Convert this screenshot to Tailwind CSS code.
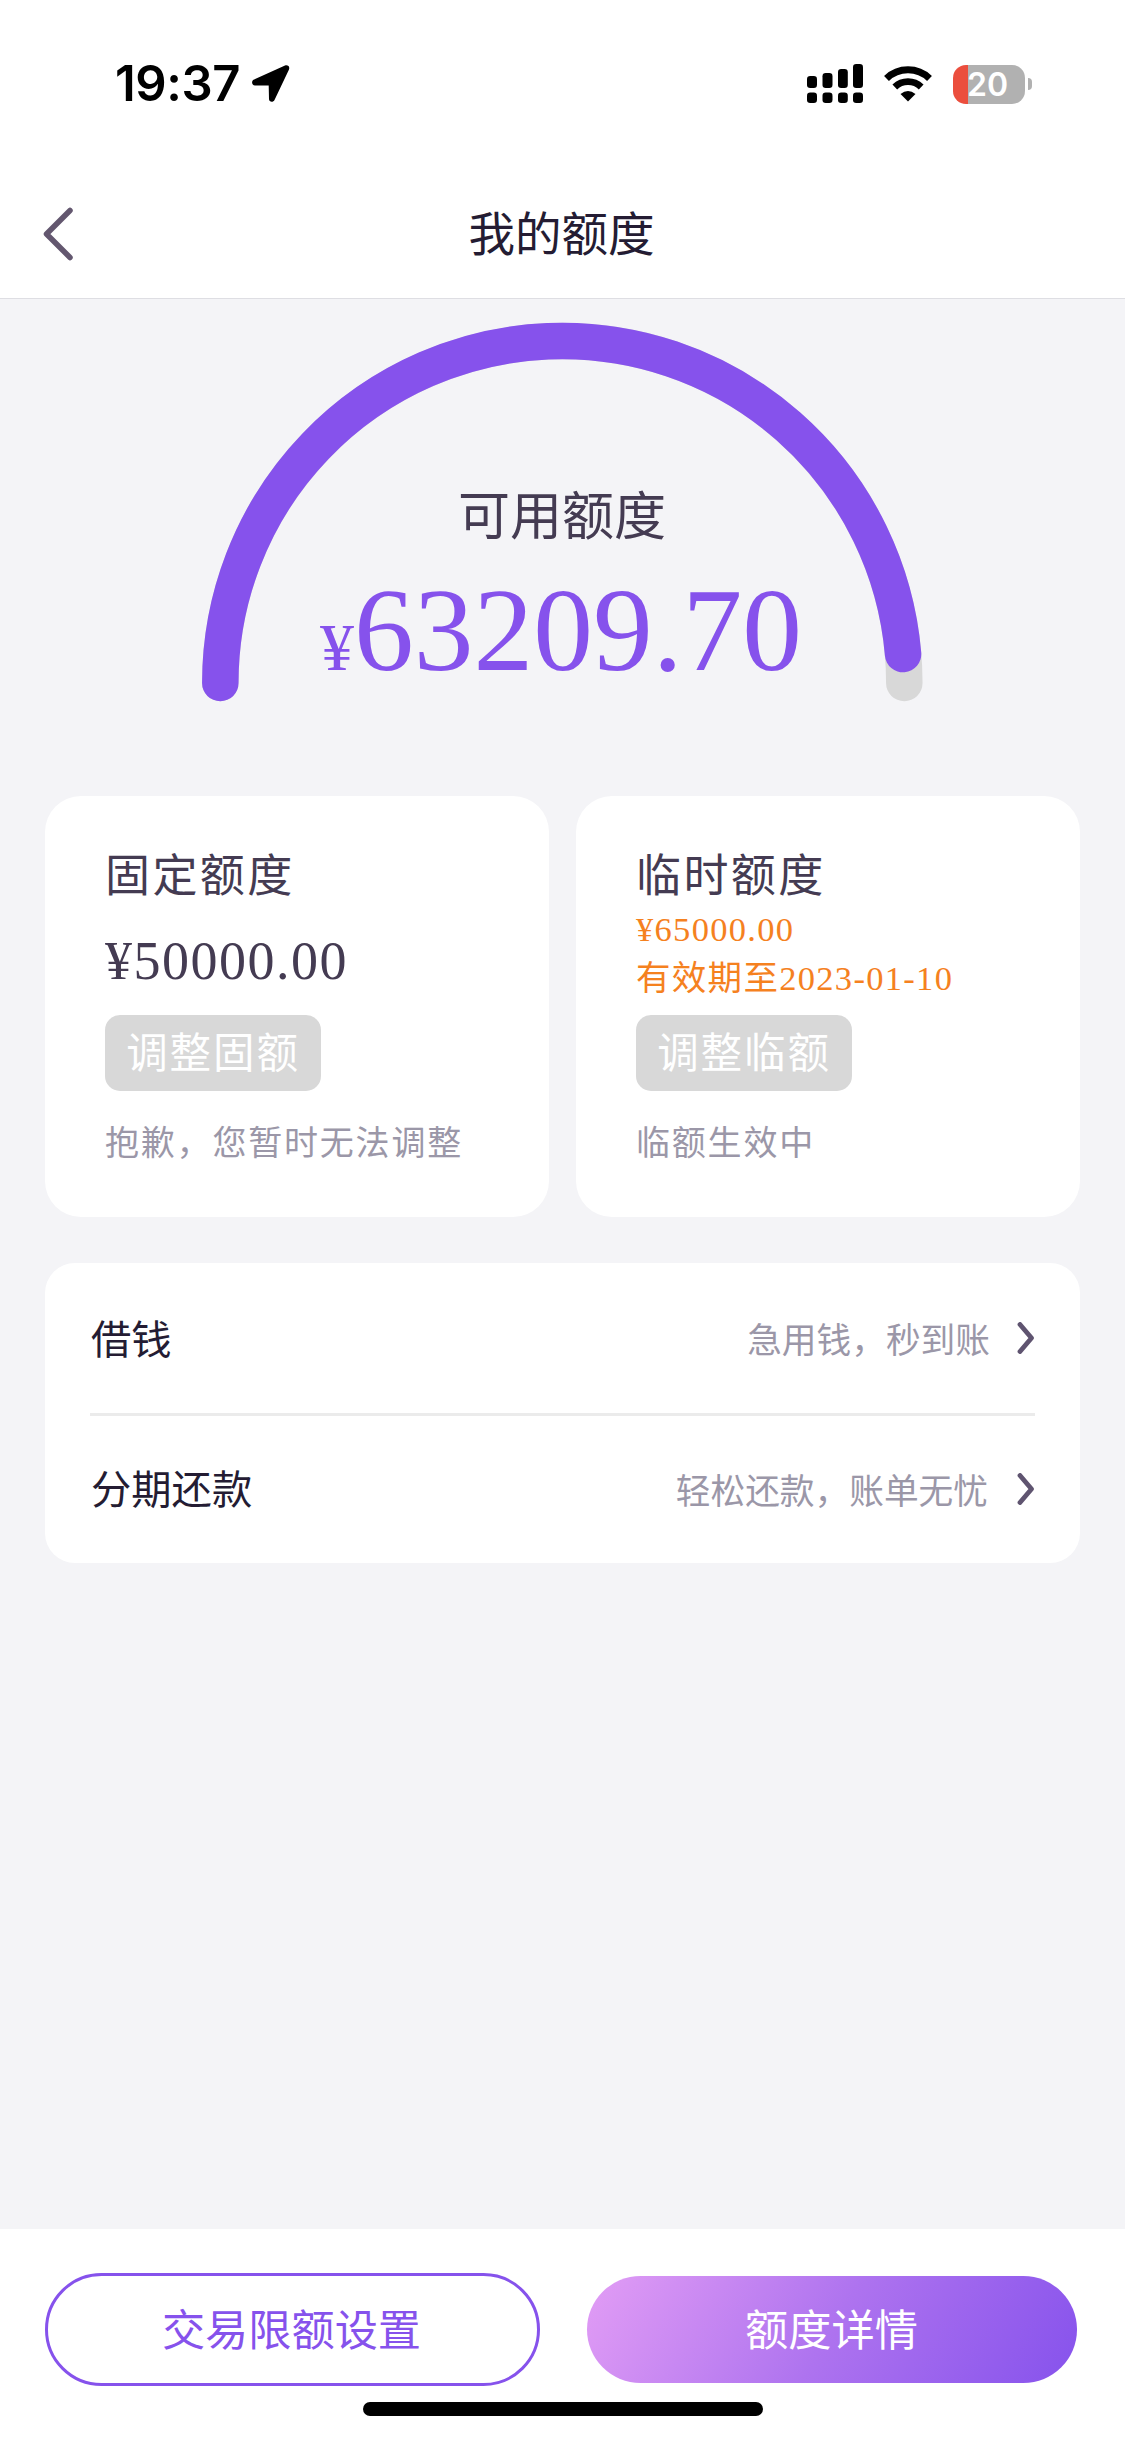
<!DOCTYPE html>
<html lang="zh-CN">
<head>
<meta charset="utf-8">
<title>我的额度</title>
<script src="https://cdn.jsdelivr.net/npm/@tailwindcss/browser@4"></script>
</head>
<body class="bg-[#f4f4f7]">
<div class="flex h-[2439px] w-[1125px] flex-col overflow-hidden bg-[#f4f4f7] font-['Noto_Sans_CJK_SC',sans-serif] text-[#443b52]">

  <!-- Status bar and title bar -->
  <header class="h-[299px] shrink-0 border-b border-[#dedee3] bg-white">
    <div class="flex h-[168px] items-center justify-between pr-[93px] pl-[115px] text-black">
      <div class="flex items-center gap-[12px]">
        <span class="font-['Inter',sans-serif] text-[49px] leading-[60px] font-semibold tracking-[-0.400px]">19:37</span>
        <svg class="h-[38px] w-[38px]" viewBox="0 0 38 38"><path d="M1.500 14.800 33 0.500C36 -0.300 38 1.500 37 4.500L22.500 35C21.500 37.500 17 37.500 17 34L16.700 20.400 3 20.400C-0.300 20.400 -0.800 16.300 1.500 14.800Z"/></svg>
      </div>
      <div class="flex items-center">
        <svg class="h-[40px] w-[57px]" viewBox="0 0 57 40">
          <rect x="0" y="12" width="10" height="12" rx="3.200"/><rect x="15.500" y="9" width="10" height="15" rx="3.200"/><rect x="31" y="5" width="9.800" height="19" rx="3.200"/><rect x="46" y="0" width="10" height="24" rx="3.200"/>
          <rect x="0" y="28.500" width="10" height="10.500" rx="3.200"/><rect x="15.500" y="28.500" width="10" height="10.500" rx="3.200"/><rect x="31" y="28.500" width="9.800" height="10.500" rx="3.200"/><rect x="46" y="28.500" width="10" height="10.500" rx="3.200"/>
        </svg>
        <svg class="ml-[20px] h-[36px] w-[48px]" viewBox="0 0 48 36" fill="none" stroke="#000">
          <path d="M2.500 12.500A31 31 0 0 1 45.500 12.500" stroke-width="7"/>
          <path d="M10.800 21A19 19 0 0 1 37.200 21" stroke-width="6.800"/>
          <path d="M24 35.500 16.500 28Q24 21.800 31.500 28Z" fill="#000" stroke="none"/>
        </svg>
        <div class="ml-[21px] flex h-[39px] w-[72px] items-center overflow-hidden rounded-[13px] bg-[linear-gradient(90deg,#eb4e3d_15px,#b1b1b1_15px)] pl-[14px]">
          <span class="font-['Inter',sans-serif] text-[32px] leading-[39px] font-semibold text-white">20</span>
        </div>
        <div class="ml-[3px] h-[12px] w-[4px] rounded-r-full bg-[#b1b1b1]"></div>
      </div>
    </div>
    <div class="grid h-[130px] grid-cols-[120px_1fr_122px] items-center">
      <svg class="mt-[2px] ml-[42px] h-[54px] w-[32px]" viewBox="0 0 32 54" fill="none" stroke="#63576f" stroke-width="5.500" stroke-linecap="round" stroke-linejoin="round"><path d="M28 3.500 4.500 27 28 50.500"/></svg>
      <h1 class="pb-[4px] text-center text-[46.500px] leading-[60px] text-[#241c33]">我的额度</h1>
    </div>
  </header>

  <!-- Available credit gauge -->
  <section class="grid h-[497px] shrink-0 justify-items-center">
    <svg class="col-start-1 row-start-1 h-[420px] w-[1125px]" viewBox="0 299 1125 420" fill="none" stroke-width="36.500" stroke-linecap="round">
      <path d="M220.300 683A342 342 0 0 1 904.300 683" stroke="#d8d8d8"/>
      <path d="M220.300 683A342 342 0 0 1 903.070 654" stroke="#8652ec"/>
    </svg>
    <div class="col-start-1 row-start-1 flex flex-col items-center pt-[175px]">
      <p class="pr-[1px] text-[52px] leading-[78px]">可用额度</p>
      <p class="mt-[10px] pr-[3px] font-['Liberation_Serif',serif] text-[119.500px] leading-[136px] text-[#8652ec]"><span class="text-[68px]">¥</span>63209.70</p>
    </div>
  </section>

  <!-- Fixed and temporary credit -->
  <section class="mx-[45px] grid h-[421px] shrink-0 grid-cols-2 gap-[27px]">
    <article class="flex flex-col items-start rounded-[36px] bg-white pl-[60px]">
      <h2 class="mt-[44px] text-[45px] leading-[66px] tracking-[2.400px]">固定额度</h2>
      <p class="mt-[25px] h-[60px] font-['Liberation_Serif',serif] text-[54px] leading-[60px] tracking-[1.500px]">¥50000.00</p>
      <button class="mt-[24px] h-[76px] w-[216px] rounded-[15px] bg-[#d8d8d8] text-[41.500px] leading-[70px] pb-[6px] tracking-[1.900px] text-white">调整固额</button>
      <p class="mt-[25px] text-[34px] leading-[50px] tracking-[1.800px] text-[#9b97a8]">抱歉，您暂时无法调整</p>
    </article>
    <article class="flex flex-col items-start rounded-[36px] bg-white pl-[60px]">
      <h2 class="mt-[44px] text-[45px] leading-[66px] tracking-[2.400px]">临时额度</h2>
      <div class="h-[109px] font-['Liberation_Serif','Noto_Sans_CJK_SC',serif] text-[34.500px] leading-[49px] tracking-[1.300px] text-[#f5811f]">
        <p class="-mt-[1px] h-[49px]">¥65000.00</p>
        <p class="h-[49px]">有效期至2023-01-10</p>
      </div>
      <button class="h-[76px] w-[216px] rounded-[15px] bg-[#d8d8d8] text-[41.500px] leading-[70px] pb-[6px] tracking-[1.900px] text-white">调整临额</button>
      <p class="mt-[25px] text-[34px] leading-[50px] tracking-[1.800px] text-[#9b97a8]">临额生效中</p>
    </article>
  </section>

  <!-- Links -->
  <section class="mx-[45px] mt-[46px] flex h-[300px] shrink-0 flex-col rounded-[30px] bg-white px-[45px]">
    <a class="flex h-[153px] items-center border-b-3 border-[#ebebeb]">
      <span class="pb-[3px] pl-[1px] text-[40.300px] leading-[60px] text-[#241c33]">借钱</span>
      <span class="ml-auto text-[34.700px] leading-[50px] text-[#9b97a8]">急用钱，秒到账</span>
      <svg class="ml-[26px] h-[32px] w-[19px]" viewBox="0 0 19 32" fill="none" stroke="#5f5470" stroke-width="4.800" stroke-linecap="round" stroke-linejoin="round"><path d="M4 2.500 15.500 16 4 29.500"/></svg>
    </a>
    <a class="flex h-[145px] items-center">
      <span class="pb-[3px] pl-[1px] text-[40.300px] leading-[60px] text-[#241c33]">分期还款</span>
      <span class="ml-auto text-[34.700px] leading-[50px] text-[#9b97a8]">轻松还款，账单无忧</span>
      <svg class="ml-[28px] h-[32px] w-[19px]" viewBox="0 0 19 32" fill="none" stroke="#5f5470" stroke-width="4.800" stroke-linecap="round" stroke-linejoin="round"><path d="M4 2.500 15.500 16 4 29.500"/></svg>
    </a>
  </section>

  <!-- Bottom actions -->
  <footer class="mt-auto flex h-[210px] shrink-0 flex-col bg-white pt-[44px]">
    <div class="flex h-[113px] items-center pl-[45px]">
      <button class="h-[113px] w-[495px] rounded-full border-3 border-[#8652ec] pr-[2px] pb-[5px] text-[43.200px] leading-[60px] text-[#8652ec]">交易限额设置</button>
      <button class="ml-[47px] h-[107px] w-[490px] rounded-full bg-[linear-gradient(120deg,#e29df5_0%,#ae73ef_50%,#8652ec_100%)] pr-[1px] pb-[5px] text-[43.200px] leading-[60px] text-white">额度详情</button>
    </div>
    <div class="mt-[16px] h-[14px] w-[400px] self-center rounded-full bg-black"></div>
  </footer>
</div>
</body>
</html>
